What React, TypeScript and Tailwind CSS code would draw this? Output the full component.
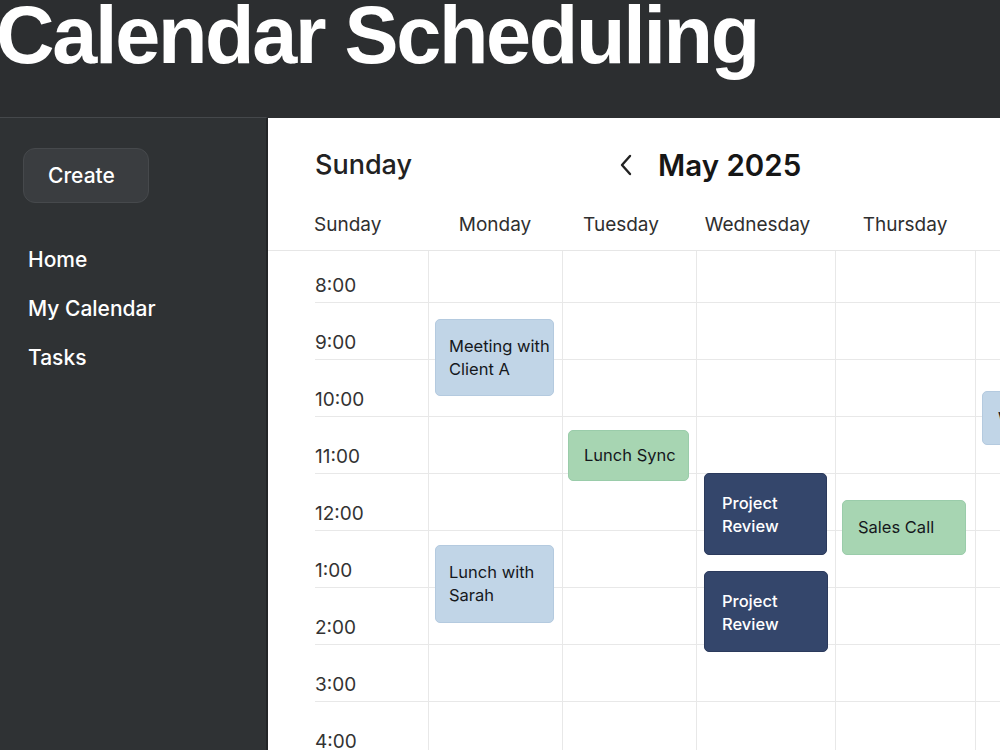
import React from 'react';

type CalEvent = {
    title: string;
    left: number;
    top: number;
    width: number;
    height: number;
    tone: 'blue' | 'green' | 'navy';
    multiline?: boolean;
};

const days = [
    { name: 'Monday', cls: 'text-center' },
    { name: 'Tuesday', cls: 'text-center pr-[16px]' },
    { name: 'Wednesday', cls: 'text-center pr-[16px]' },
    { name: 'Thursday', cls: 'text-center' },
    { name: '', cls: '' },
];
const hours = ['8:00', '9:00', '10:00', '11:00', '12:00', '1:00', '2:00', '3:00', '4:00'];

// offsets are relative to the top-left of the hour grid
const events: CalEvent[] = [
    { title: 'Meeting with Client A', left: 167, top: 68, width: 119, height: 77, tone: 'blue', multiline: true },
    { title: 'Lunch Sync', left: 300, top: 179, width: 121, height: 51, tone: 'green' },
    { title: 'Project Review', left: 436, top: 222, width: 123, height: 82, tone: 'navy', multiline: true },
    { title: 'Sales Call', left: 574, top: 249, width: 124, height: 55, tone: 'green' },
    { title: 'Lunch with Sarah', left: 167, top: 294, width: 119, height: 78, tone: 'blue', multiline: true },
    { title: 'Project Review', left: 436, top: 320, width: 124, height: 81, tone: 'navy', multiline: true },
    { title: 'Weekly Sync', left: 714, top: 140, width: 90, height: 54, tone: 'blue' },
];

const toneClass = {
    blue: 'bg-[#c1d5e7] border-[#b4cadf] text-[#15181c]',
    green: 'bg-[#a7d5b2] border-[#9accaa] text-[#15181c]',
    navy: 'bg-[#34466b] border-[#2b3a5c] text-white font-medium',
};

const colWidths = 'grid-cols-[160px_134px_134px_139px_140px_1fr]';

const EventBlock: React.FC<{ ev: CalEvent }> = ({ ev }) => {
    let layout = 'pl-[15px] flex items-center whitespace-nowrap';
    if (ev.multiline) layout = ev.tone === 'navy' ? 'pl-[17px] pt-[18px]' : 'pl-[13px] pt-[15px]';
    return (
        <div
            className={`absolute rounded-[5px] border text-[16.5px] leading-[23px] overflow-hidden ${toneClass[ev.tone]} ${layout}`}
            style={{ left: ev.left, top: ev.top, width: ev.width, height: ev.height }}
        >
            {ev.title}
        </div>
    );
};

export default function App() {
    return (
        <div className="w-[1000px] h-[750px] overflow-hidden bg-[#2c2e30] flex flex-col font-['Inter',sans-serif]">
            {/* page title */}
            <div className="h-[117px] shrink-0 overflow-hidden">
                <h1 className="text-white text-[81px] leading-[81px] font-bold tracking-[-2.3px] -ml-[4px] -mt-[5px] font-['Liberation_Sans',Arial,sans-serif]">
                    Calendar Scheduling
                </h1>
            </div>

            <div className="flex flex-1 min-h-0">
                {/* sidebar */}
                <aside className="w-[268px] shrink-0 bg-[#2f3234] border-t border-[#45484b] border-r-2 border-r-[#232527] pt-[30px] pl-[23px]">
                    <button className="w-[126px] h-[55px] rounded-[12px] bg-[#3a3d40] border border-[#46494c] text-white text-[21px] font-medium text-left pl-[24px]">
                        Create
                    </button>
                    <nav className="mt-[46px] flex flex-col gap-[27px] pl-[5px] text-white text-[21px] font-medium leading-[22px]">
                        <span>Home</span>
                        <span>My Calendar</span>
                        <span>Tasks</span>
                    </nav>
                </aside>

                {/* calendar */}
                <main className="flex-1 bg-white flex flex-col min-w-0 mt-[1px] text-[#2a2a2a]">
                    <div className="h-[82px] pt-[12px] flex items-center shrink-0">
                        <div className="w-[352px] pl-[47px] text-[27px] font-medium text-[#222]">Sunday</div>
                        <svg width="12" height="22" viewBox="0 0 12 22" className="text-[#222]">
                            <path d="M10 2 L2 11 L10 20" fill="none" stroke="currentColor" strokeWidth="2.4" strokeLinecap="round" strokeLinejoin="round" />
                        </svg>
                        <div className="ml-[26px] text-[29.5px] font-semibold text-[#161616]">May 2025</div>
                    </div>

                    <div className={`grid ${colWidths} h-[51px] items-center border-b border-[#e6e6e6] shrink-0 text-[19px] text-[#2f2f2f]`}>
                        <div className="pl-[46px]">Sunday</div>
                        {days.map((d, i) => (
                            <div key={i} className={`whitespace-nowrap ${d.cls}`}>{d.name}</div>
                        ))}
                    </div>

                    <div className="relative flex-1 overflow-hidden">
                        <div className={`grid ${colWidths}`}>
                            {hours.map((h, i) => (
                                <React.Fragment key={h}>
                                    <div className={`pl-[47px] ${i === 0 ? 'h-[52px]' : 'h-[57px]'}`}>
                                        <div className="h-full border-b border-[#e8e8e8] flex items-end pb-[5px] text-[19px] leading-[22px] text-[#333]">
                                            {h}
                                        </div>
                                    </div>
                                    {days.map((_, j) => (
                                        <div key={j} className="border-l border-b border-[#e8e8e8]" />
                                    ))}
                                </React.Fragment>
                            ))}
                        </div>

                        {events.map((ev, i) => (
                            <EventBlock key={i} ev={ev} />
                        ))}
                    </div>
                </main>
            </div>
        </div>
    );
}
